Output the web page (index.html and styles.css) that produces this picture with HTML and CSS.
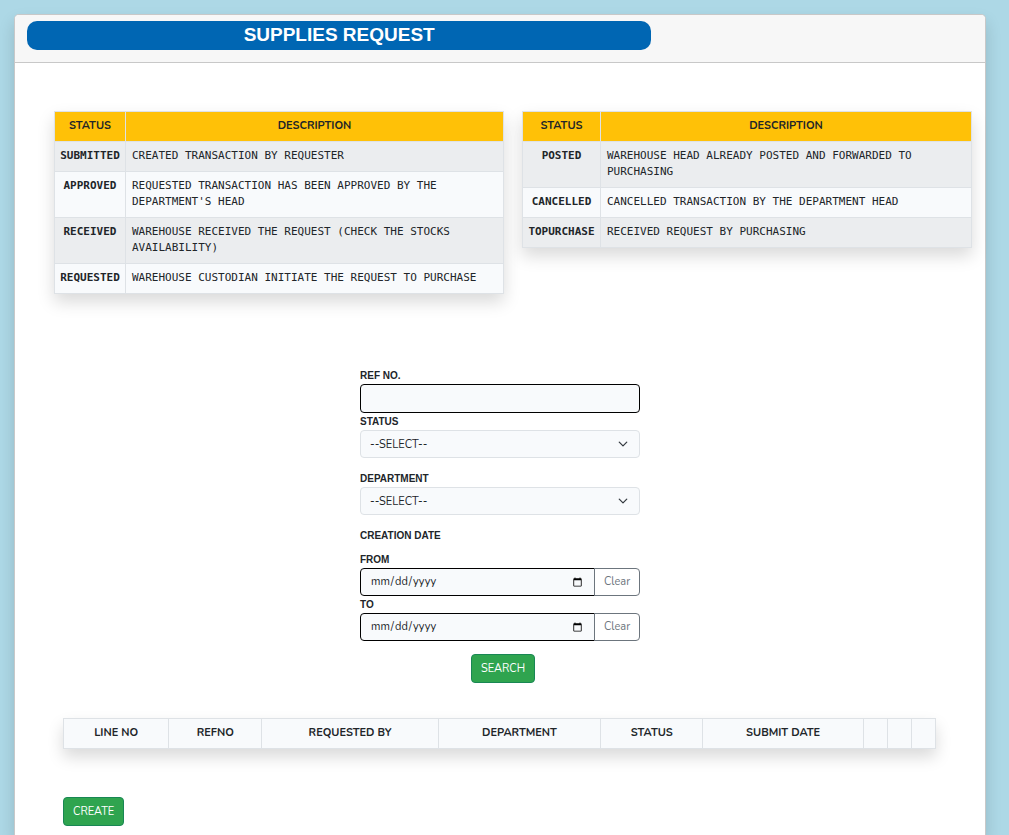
FILE: index.html
```html
<!DOCTYPE html>
<html lang="en">
<head>
<meta charset="utf-8">
<meta name="viewport" content="width=device-width, initial-scale=1">
<title>Supplies Request</title>
<link rel="stylesheet" href="styles.css">
</head>
<body>
<main class="card">
  <header class="card-header">
    <h1 class="title">SUPPLIES REQUEST</h1>
  </header>

  <section class="legends">
    <table class="table legend legend-left">
      <thead><tr><th>STATUS</th><th>DESCRIPTION</th></tr></thead>
      <tbody>
        <tr><th scope="row">SUBMITTED</th><td>CREATED TRANSACTION BY REQUESTER</td></tr>
        <tr><th scope="row">APPROVED</th><td>REQUESTED TRANSACTION HAS BEEN APPROVED BY THE DEPARTMENT'S HEAD</td></tr>
        <tr><th scope="row">RECEIVED</th><td>WAREHOUSE RECEIVED THE REQUEST (CHECK THE STOCKS AVAILABILITY)</td></tr>
        <tr><th scope="row">REQUESTED</th><td>WAREHOUSE CUSTODIAN INITIATE THE REQUEST TO PURCHASE</td></tr>
      </tbody>
    </table>
    <table class="table legend legend-right">
      <thead><tr><th>STATUS</th><th>DESCRIPTION</th></tr></thead>
      <tbody>
        <tr><th scope="row">POSTED</th><td>WAREHOUSE HEAD ALREADY POSTED AND FORWARDED TO PURCHASING</td></tr>
        <tr><th scope="row">CANCELLED</th><td>CANCELLED TRANSACTION BY THE DEPARTMENT HEAD</td></tr>
        <tr><th scope="row">TOPURCHASE</th><td>RECEIVED REQUEST BY PURCHASING</td></tr>
      </tbody>
    </table>
  </section>

  <form class="filters">
    <div class="field">
      <label for="refno">REF NO.</label>
      <input class="control dark" type="text" id="refno">
    </div>
    <div class="field spaced">
      <label for="status">STATUS</label>
      <select class="control select" id="status"><option>--SELECT--</option></select>
    </div>
    <div class="field spaced">
      <label for="department">DEPARTMENT</label>
      <select class="control select" id="department"><option>--SELECT--</option></select>
    </div>
    <fieldset class="dates">
      <legend>CREATION DATE</legend>
      <div class="field">
        <label for="from">FROM</label>
        <div class="group">
          <input class="control dark" type="date" id="from">
          <button class="clear" type="button">Clear</button>
        </div>
      </div>
      <div class="field">
        <label for="to">TO</label>
        <div class="group">
          <input class="control dark" type="date" id="to">
          <button class="clear" type="button">Clear</button>
        </div>
      </div>
    </fieldset>
    <div class="actions">
      <button class="btn" type="button">SEARCH</button>
    </div>
  </form>

  <section class="results">
    <table class="table list">
      <colgroup>
        <col class="c-line"><col class="c-ref"><col class="c-by"><col class="c-dept"><col class="c-status"><col class="c-date"><col class="c-act"><col class="c-act"><col class="c-act">
      </colgroup>
      <thead>
        <tr><th>LINE NO</th><th>REFNO</th><th>REQUESTED BY</th><th>DEPARTMENT</th><th>STATUS</th><th>SUBMIT DATE</th><th></th><th></th><th></th></tr>
      </thead>
    </table>
    <button class="btn" type="button">CREATE</button>
  </section>
</main>
</body>
</html>
```

FILE: styles.css
```css
* { box-sizing: border-box; }

body {
  margin: 0;
  min-height: 100vh;
  display: flex;
  padding: 14px 23px 0 14px;
  background: #add8e6;
  color: #212529;
  font: 11px/16px Nunito, "Open Sans", sans-serif;
}

.card {
  flex: 1;
  min-width: 0;
  background: #fff;
  border: 1px solid #c8c8c8;
  border-bottom: 0;
  border-radius: 5px 5px 0 0;
  box-shadow: 0 8px 16px rgba(0, 0, 0, 0.15);
}

.card-header {
  padding: 6px 12px 12px;
  background: #f7f7f7;
  border-bottom: 1px solid #c8c8c8;
  border-radius: 4px 4px 0 0;
}

.title {
  width: 66%;
  margin: 0;
  padding-bottom: 2px;
  border-radius: 10px;
  background: #0066b3;
  color: #fff;
  font: bold 19px/27px "Liberation Sans", Arial, sans-serif;
  text-align: center;
}

.legends {
  display: grid;
  grid-template-columns: 1fr 1fr;
  align-items: start;
  gap: 18px;
  min-height: 256px;
  padding: 48px 13px 0 39px;
}

.table {
  width: 100%;
  table-layout: fixed;
  border-collapse: collapse;
  background: #f8fafc;
  box-shadow: 0 8px 16px rgba(0, 0, 0, 0.15);
}

.table th,
.table td {
  padding: 6px 6px 7px;
  border: 1px solid #dee2e6;
  vertical-align: top;
}

.table th {
  padding-left: 0;
  padding-right: 0;
  font-weight: 700;
}

.legend thead th { background: #ffc107; }

.legend tbody {
  font-family: "Lucida Console", "DejaVu Sans Mono", monospace;
}

.legend tbody tr:nth-child(odd) { background: #ebedef; }

.legend-left th:first-child { width: 71px; }
.legend-right th:first-child { width: 78px; }

.filters {
  display: flex;
  flex-direction: column;
  width: 280px;
  margin: 48px auto 0;
}

.field {
  display: flex;
  flex-direction: column;
}

.spaced { margin-bottom: 12px; }

.filters label,
.filters legend {
  padding: 0;
  font: bold 10px/17px "Liberation Sans", Arial, sans-serif;
}

.dates {
  min-width: 0;
  margin: 0;
  padding: 0;
  border: 0;
}

.dates legend { margin-bottom: 7px; }

.control {
  width: 100%;
  height: 29px;
  padding: 4px 9px;
  border: 1px solid #dee2e6;
  border-radius: 4px;
  background: #f8fafc;
  color: #212529;
  font: inherit;
}

.dark { border-color: #000; }

.select {
  appearance: none;
  height: 28px;
  padding-top: 5px;
  background: #f8fafc url("data:image/svg+xml,%3Csvg xmlns='http://www.w3.org/2000/svg' viewBox='0 0 16 16'%3E%3Cpath fill='none' stroke='%23343a40' stroke-linecap='round' stroke-linejoin='round' stroke-width='2' d='m2 5 6 6 6-6'/%3E%3C/svg%3E") no-repeat right 11px center / 10px 10px;
}

.group { display: flex; }

.group .control {
  flex: 1;
  min-width: 0;
  height: 28px;
  border-radius: 4px 0 0 4px;
}

.clear {
  width: 46px;
  margin-left: -1px;
  padding: 0;
  border: 1px solid #6c757d;
  border-radius: 0 4px 4px 0;
  background: #fff;
  color: #6c757d;
  font: inherit;
}

.btn {
  height: 29px;
  padding: 0 9px;
  border: 1px solid #198754;
  border-radius: 4px;
  background: #2fa44f;
  color: #fff;
  font: inherit;
}

.actions {
  padding: 13px 0 0 6px;
  text-align: center;
}

.actions .btn { display: inline-block; vertical-align: top; }

.results { padding: 35px 49px 0 48px; }

.list { margin-bottom: 48px; }

.c-line { width: 105px; }
.c-ref { width: 93px; }
.c-by { width: 176px; }
.c-dept { width: 162px; }
.c-status { width: 102px; }
.c-date { width: 160px; }
.c-act { width: 24px; }
```
